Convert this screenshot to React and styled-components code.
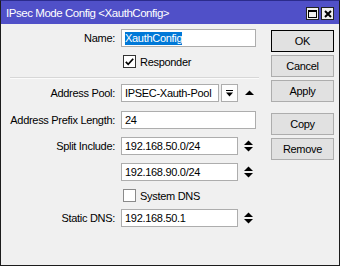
import React from "react";
import styled, { createGlobalStyle } from "styled-components";

const Global = createGlobalStyle`
  html, body { margin: 0; padding: 0; background: #f0f0f0; }
  body { font-family: "Liberation Sans", Arial, sans-serif; font-size: 11px; letter-spacing: -0.3px; }
  * { box-sizing: border-box; }
`;

const Window = styled.div`
  width: 340px;
  height: 266px;
  border: 1px solid #1c1c1c;
  border-top-color: #2b2b8c;
  background: #f0f0f0;
  display: flex;
  flex-direction: column;
  overflow: hidden;
`;

const TitleBar = styled.div`
  height: 23px;
  background: #5050c8;
  display: flex;
  align-items: center;
  padding-left: 5px;
  padding-right: 5px;
  flex: none;
`;

const TitleText = styled.div`
  flex: 1;
  color: #fff;
  font-size: 11.5px;
  letter-spacing: -0.45px;
  padding-top: 1px;
`;

const TitleBtn = styled.div`
  width: 13px;
  height: 13px;
  margin-left: 2px;
  background: #f0f0f0;
  border: 1px solid #222;
  display: flex;
  align-items: center;
  justify-content: center;
  margin-top: 2px;
`;

const Body = styled.div`
  flex: 1;
  display: flex;
  align-items: flex-start;
`;

const Form = styled.div`
  width: 262px;
  padding-top: 5px;
  display: flex;
  flex-direction: column;
`;

const Row = styled.div`
  display: flex;
  align-items: center;
  height: ${(p) => (p.$h ? p.$h : 18)}px;
  margin-top: ${(p) => p.$mt || 0}px;
`;

const Label = styled.div`
  width: 114px;
  text-align: right;
  white-space: nowrap;
  color: #000;
`;

const Field = styled.div`
  margin-left: 6px;
  display: flex;
  align-items: center;
`;

const Input = styled.div`
  width: ${(p) => p.$w}px;
  height: 18px;
  background: #fff;
  border: 1px solid #adadad;
  padding-left: 3px;
  display: flex;
  align-items: center;
  white-space: nowrap;
  overflow: hidden;
  color: #000;
`;

const Selected = styled.span`
  background: #0078d7;
  color: #fff;
  padding: 0 0 1px 0;
  line-height: 12px;
`;

const DropBtn = styled.div`
  width: 17px;
  height: 18px;
  margin-left: 2px;
  border: 1px solid #adadad;
  background: #fdfdfd;
  display: flex;
  align-items: center;
  justify-content: center;
`;

const IconSlot = styled.div`
  width: 12px;
  margin-left: ${(p) => p.$ml || 5}px;
  display: flex;
  align-items: center;
  justify-content: center;
`;

const CheckRow = styled.div`
  display: flex;
  align-items: center;
  height: 13px;
  margin-top: ${(p) => p.$mt || 0}px;
  padding-left: 122px;
`;

const Box = styled.div`
  width: 13px;
  height: 13px;
  background: #fff;
  border: 1px solid ${(p) => (p.$dark ? "#333" : "#8a8a8a")};
  display: flex;
  align-items: center;
  justify-content: center;
`;

const CheckText = styled.span`
  margin-left: 4px;
  color: #000;
`;

const Separator = styled.div`
  margin: ${(p) => p.$mt}px 4px 0 9px;
  height: 2px;
  border-top: 1px solid #d7d7d7;
  border-bottom: 1px solid #fbfbfb;
`;

const ButtonCol = styled.div`
  margin-left: 8px;
  padding-top: 6px;
  display: flex;
  flex-direction: column;
`;

const Button = styled.div`
  width: 63px;
  height: 22px;
  margin-top: ${(p) => p.$mt || 0}px;
  border: 1px solid ${(p) => (p.$default ? "#000" : "#adadad")};
  background: #e1e1e1;
  display: flex;
  align-items: center;
  justify-content: center;
  color: #000;
`;

const UpArrow = () => (
  <svg width="9" height="6" viewBox="0 0 9 6">
    <polygon points="0,5 4.5,0.5 9,5" fill="#000" />
  </svg>
);

const UpDown = () => (
  <svg width="9" height="12" viewBox="0 0 9 12">
    <polygon points="0,5 4.5,0.5 9,5" fill="#000" />
    <polygon points="0,7 9,7 4.5,11.5" fill="#000" />
  </svg>
);

const DropIcon = () => (
  <svg width="7" height="7" viewBox="0 0 7 7">
    <rect x="0" y="0" width="7" height="1" fill="#000" />
    <polygon points="0,2.5 7,2.5 3.5,6.5" fill="#000" />
  </svg>
);

const Check = () => (
  <svg width="9" height="8" viewBox="0 0 9 8">
    <polyline points="0.8,3.8 3.2,6.3 8.2,0.8" fill="none" stroke="#000" strokeWidth="1.7" />
  </svg>
);

const MaxIcon = () => (
  <svg width="9" height="8" viewBox="0 0 9 8">
    <rect x="0.5" y="0.5" width="8" height="7" fill="none" stroke="#000" strokeWidth="1" />
    <rect x="0" y="0" width="9" height="2" fill="#000" />
  </svg>
);

const CloseIcon = () => (
  <svg width="8" height="8" viewBox="0 0 8 8">
    <path d="M1 1 L7 7 M7 1 L1 7" stroke="#000" strokeWidth="2" />
  </svg>
);

export default function App() {
  return (
    <>
      <Global />
      <Window>
        <TitleBar>
          <TitleText>IPsec Mode Config &lt;XauthConfig&gt;</TitleText>
          <TitleBtn><MaxIcon /></TitleBtn>
          <TitleBtn><CloseIcon /></TitleBtn>
        </TitleBar>
        <Body>
          <Form>
            <Row>
              <Label>Name:</Label>
              <Field>
                <Input $w={135}><Selected>XauthConfig</Selected></Input>
              </Field>
            </Row>
            <CheckRow $mt={8}>
              <Box $dark><Check /></Box>
              <CheckText>Responder</CheckText>
            </CheckRow>
            <Separator $mt={9} />
            <Row $mt={5}>
              <Label>Address Pool:</Label>
              <Field>
                <Input $w={98}>IPSEC-Xauth-Pool</Input>
                <DropBtn><DropIcon /></DropBtn>
                <IconSlot $ml={5}><UpArrow /></IconSlot>
              </Field>
            </Row>
            <Row $mt={9}>
              <Label>Address Prefix Length:</Label>
              <Field>
                <Input $w={135}>24</Input>
              </Field>
            </Row>
            <Row $mt={8}>
              <Label>Split Include:</Label>
              <Field>
                <Input $w={117}>192.168.50.0/24</Input>
                <IconSlot $ml={4}><UpDown /></IconSlot>
              </Field>
            </Row>
            <Row $mt={8}>
              <Label></Label>
              <Field>
                <Input $w={117}>192.168.90.0/24</Input>
                <IconSlot $ml={4}><UpDown /></IconSlot>
              </Field>
            </Row>
            <CheckRow $mt={8}>
              <Box />
              <CheckText>System DNS</CheckText>
            </CheckRow>
            <Row $mt={7}>
              <Label>Static DNS:</Label>
              <Field>
                <Input $w={117}>192.168.50.1</Input>
                <IconSlot $ml={4}><UpDown /></IconSlot>
              </Field>
            </Row>
          </Form>
          <ButtonCol>
            <Button $default>OK</Button>
            <Button $mt={3}>Cancel</Button>
            <Button $mt={3}>Apply</Button>
            <Button $mt={11}>Copy</Button>
            <Button $mt={3}>Remove</Button>
          </ButtonCol>
        </Body>
      </Window>
    </>
  );
}
